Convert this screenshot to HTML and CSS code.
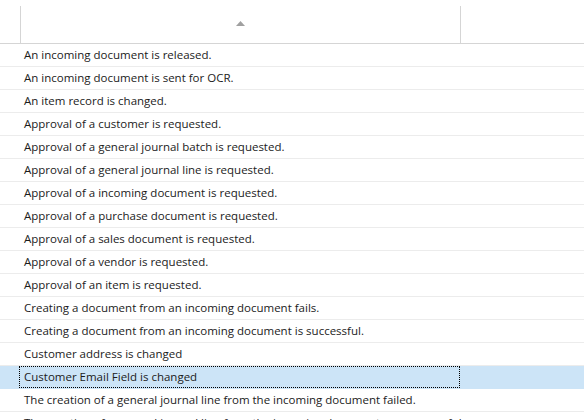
FILE: index.html
```html
<!DOCTYPE html>
<html lang="en">
<head>
<meta charset="utf-8">
<title>Events</title>
<link rel="stylesheet" href="styles.css">
</head>
<body>
<div class="grid">
  <div class="head">
    <div class="gutter"></div>
    <div class="hcell sorted">
      <svg class="sort" width="9" height="5" viewBox="0 0 9 5"><path d="M4.5 0 L9 5 L0 5 Z" fill="#a0a0a0"/></svg>
    </div>
    <div class="hcell rest"></div>
  </div>
  <div class="body">
    <div class="row"><div class="gutter"></div><div class="cell">An incoming document is released.</div></div>
    <div class="row"><div class="gutter"></div><div class="cell">An incoming document is sent for OCR.</div></div>
    <div class="row"><div class="gutter"></div><div class="cell">An item record is changed.</div></div>
    <div class="row"><div class="gutter"></div><div class="cell">Approval of a customer is requested.</div></div>
    <div class="row"><div class="gutter"></div><div class="cell">Approval of a general journal batch is requested.</div></div>
    <div class="row"><div class="gutter"></div><div class="cell">Approval of a general journal line is requested.</div></div>
    <div class="row"><div class="gutter"></div><div class="cell">Approval of a incoming document is requested.</div></div>
    <div class="row"><div class="gutter"></div><div class="cell">Approval of a purchase document is requested.</div></div>
    <div class="row"><div class="gutter"></div><div class="cell">Approval of a sales document is requested.</div></div>
    <div class="row"><div class="gutter"></div><div class="cell">Approval of a vendor is requested.</div></div>
    <div class="row"><div class="gutter"></div><div class="cell">Approval of an item is requested.</div></div>
    <div class="row"><div class="gutter"></div><div class="cell">Creating a document from an incoming document fails.</div></div>
    <div class="row"><div class="gutter"></div><div class="cell">Creating a document from an incoming document is successful.</div></div>
    <div class="row"><div class="gutter"></div><div class="cell">Customer address is changed</div></div>
    <div class="row selected"><div class="gutter"></div><div class="cell focus">Customer Email Field is changed</div></div>
    <div class="row"><div class="gutter"></div><div class="cell">The creation of a general journal line from the incoming document failed.</div></div>
    <div class="row"><div class="gutter"></div><div class="cell">The creation of a general journal line from the incoming document was successful.</div></div>
  </div>
</div>
</body>
</html>
```
FILE: styles.css
```css
* { box-sizing: border-box; }
html, body { margin: 0; padding: 0; background: #fff; }
body {
  font-family: "Open Sans", "Noto Sans", sans-serif;
  font-size: 11.5px;
  color: #1b1b1b;
  overflow: hidden;
  height: 420px;
}
.grid { width: 584px; }
.head {
  display: grid;
  grid-template-columns: 20px 440px 1fr;
  height: 44px;
  border-bottom: 1px solid #d5d5d5;
  padding-top: 6px;
}
.hcell {
  border-left: 1px solid #d5d5d5;
  display: flex;
  justify-content: center;
  padding-top: 15px;
}
.sort { display: block; }
.row {
  display: grid;
  grid-template-columns: 19px 441px 1fr;
  height: 23px;
  border-bottom: 1px solid #ececec;
}
.cell {
  padding-left: 5px;
  line-height: 22px;
  height: 22px;
  white-space: nowrap;
  overflow: visible;
}
.row.selected {
  background: #cce4f7;
  border-bottom-color: #cce4f7;
}
.cell.focus {
  border: 1px dotted #000;
  padding-left: 4px;
  line-height: 20px;
}
```
